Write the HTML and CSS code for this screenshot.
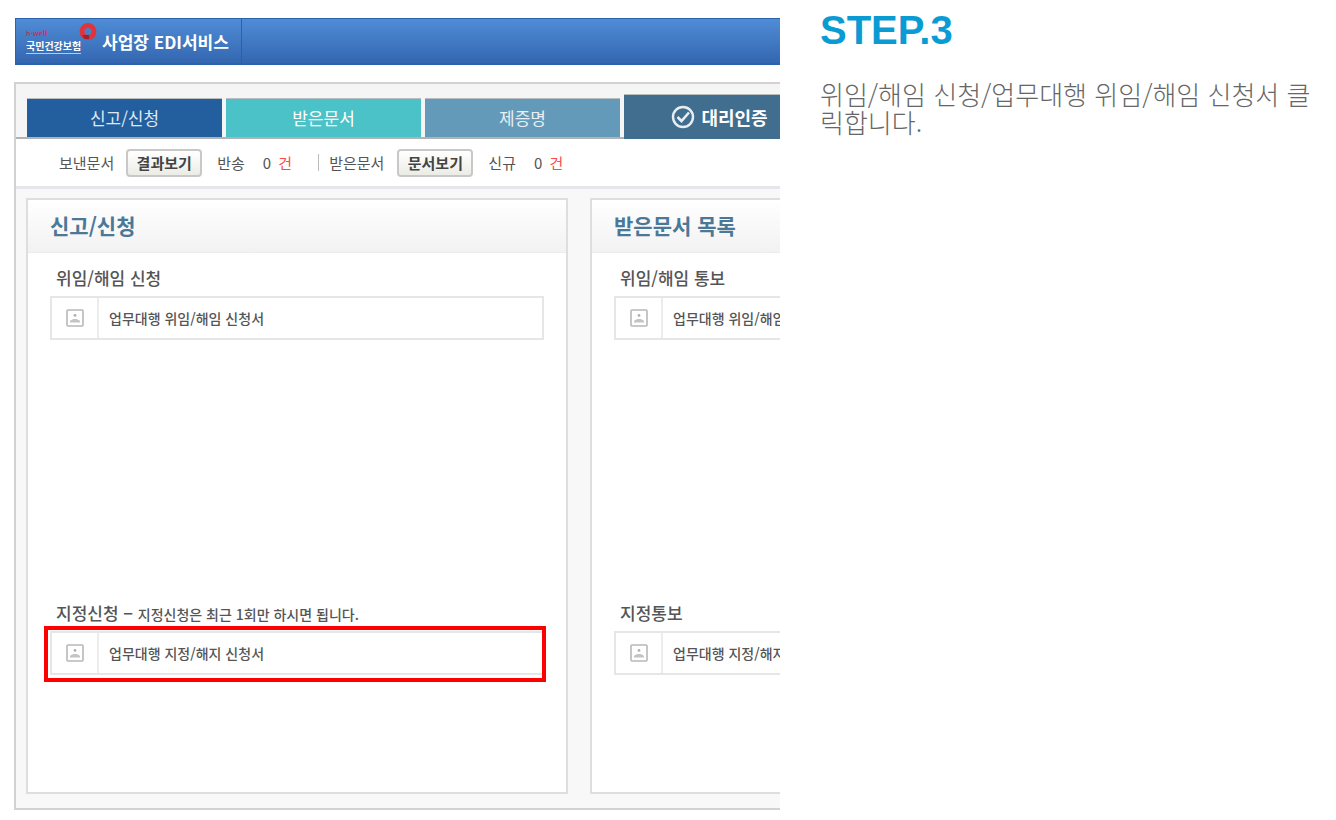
FILE: index.html
```html
<!DOCTYPE html>
<html lang="ko">
<head>
<meta charset="utf-8">
<meta name="viewport" content="width=device-width, initial-scale=1">
<title>사업장 EDI서비스 - STEP.3</title>
<link rel="stylesheet" href="styles.css">
</head>
<body>
<svg class="sprite" aria-hidden="true">
  <symbol id="doc" viewBox="0 0 18 18">
    <rect x="1" y="1" width="16" height="16" rx="1" fill="#fff" stroke="#b8b8b8" stroke-width="1.6"/>
    <circle cx="9" cy="6.4" r="1.4" fill="#b0b0b0"/>
    <path d="M4 13.600V12c1.400-1.400 3.200-2 5-2s3.600.6 5 2v1.600z" fill="#c4c4c4"/>
  </symbol>
</svg>
<main class="page">
  <section class="preview">
    <div class="screen">
      <header class="bar">
        <a class="brand" href="#">
          <span class="logo">
            <span class="logo-top">h·well</span>
            <span class="logo-name">국민건강보험</span>
            <svg class="logo-ring" viewBox="0 0 18 18" aria-hidden="true">
              <circle cx="9" cy="8.500" r="6" fill="none" stroke="#e23338" stroke-width="5"/>
              <path d="M5.500 6h7L9 11z" fill="#4a7dc9"/>
              <path d="M3 12h7v4H5.500z" fill="#a3202c"/>
            </svg>
          </span>
          <span class="service">사업장 EDI서비스</span>
        </a>
      </header>
      <div class="frame">
        <nav class="tabs">
          <button class="tab tab-apply" type="button">신고/신청</button>
          <button class="tab tab-inbox" type="button">받은문서</button>
          <button class="tab tab-cert" type="button">제증명</button>
          <button class="tab tab-agent" type="button">
            <svg class="check" viewBox="0 0 24 24" aria-hidden="true"><circle cx="12" cy="12" r="10" fill="none" stroke="#e6eef3" stroke-width="2.400"/><path d="M6.500 12l4 4 7.500-8.500" fill="none" stroke="#e6eef3" stroke-width="2.600"/></svg>
            대리인증
          </button>
        </nav>
        <div class="status">
          <span class="sent">보낸문서</span>
          <button class="mini" type="button">결과보기</button>
          <span class="kind">반송</span>
          <span class="count">0 <em>건</em></span>
          <span class="received">받은문서</span>
          <button class="mini" type="button">문서보기</button>
          <span class="kind">신규</span>
          <span class="count">0 <em>건</em></span>
        </div>
        <div class="panels">
          <section class="panel">
            <h2 class="panel-title">신고/신청</h2>
            <div class="groups">
              <div class="group">
                <h3 class="label">위임/해임 신청</h3>
                <a class="item" href="#"><span class="thumb"><svg class="doc"><use href="#doc"/></svg></span><span class="name">업무대행 위임/해임 신청서</span></a>
              </div>
              <div class="group">
                <h3 class="label">지정신청 − <small class="note">지정신청은 최근 1회만 하시면 됩니다.</small></h3>
                <a class="item item-marked" href="#"><span class="thumb"><svg class="doc"><use href="#doc"/></svg></span><span class="name">업무대행 지정/해지 신청서</span></a>
              </div>
            </div>
          </section>
          <section class="panel">
            <h2 class="panel-title">받은문서 목록</h2>
            <div class="groups">
              <div class="group">
                <h3 class="label">위임/해임 통보</h3>
                <a class="item" href="#"><span class="thumb"><svg class="doc"><use href="#doc"/></svg></span><span class="name">업무대행 위임/해임 통보서</span></a>
              </div>
              <div class="group">
                <h3 class="label">지정통보</h3>
                <a class="item" href="#"><span class="thumb"><svg class="doc"><use href="#doc"/></svg></span><span class="name">업무대행 지정/해지 통보서</span></a>
              </div>
            </div>
          </section>
        </div>
      </div>
    </div>
  </section>
  <section class="guide">
    <h1 class="step">STEP.3</h1>
    <p class="text">위임/해임 신청/업무대행 위임/해임 신청서 클릭합니다.</p>
  </section>
</main>
</body>
</html>
```
FILE: styles.css
```css
* { box-sizing: border-box; }
body {
  margin: 0;
  background: #fff;
  color: #555;
  font-family: "Noto Sans CJK KR", sans-serif;
}
h1, h2, h3, p { margin: 0; }
a { color: inherit; text-decoration: none; }
button { font-family: inherit; cursor: pointer; }
.sprite { position: absolute; width: 0; height: 0; }

.page {
  display: grid;
  grid-template-columns: minmax(0, 780fr) minmax(0, 516fr);
  gap: 40px;
}
.preview { overflow: hidden; padding: 18px 0 10px 14px; }
.screen { width: 1130px; }

.bar {
  display: flex;
  height: 47px;
  margin-left: 1px;
  border: 1px solid #2c62ae;
  border-bottom-width: 2px;
  background: linear-gradient(#508cd6, #3367b0);
}
.brand {
  display: flex;
  align-items: center;
  gap: 6px;
  padding: 0 12px 0 10px;
  border-right: 1px solid #2f609f;
  color: #fff;
}
.logo { position: relative; display: block; width: 70px; }
.logo-top, .logo-name { display: block; font-weight: 700; white-space: nowrap; }
.logo-top { color: #b73a5c; font-size: 7px; line-height: 10px; }
.logo-name { width: 55px; border-bottom: 1px solid #b4cbea; font-size: 10px; line-height: 15px; }
.logo-ring { position: absolute; top: -5px; right: -1px; width: 18px; height: 18px; }
.service { font-size: 17px; font-weight: 700; white-space: nowrap; }

.frame {
  margin-top: 17px;
  border: 2px solid #d2d2d2;
  background: #f8f8f8;
}
.tabs {
  display: flex;
  align-items: flex-end;
  gap: 4px;
  padding: 10px 11px 0;
  border-bottom: 2px solid #b0b3b5;
  background: #f5f5f5;
}
.tab {
  display: flex;
  align-items: center;
  justify-content: center;
  gap: 6px;
  width: 195px;
  height: 39px;
  padding: 0 0 2px;
  border: 0;
  border-top: 1px solid #b8bec0;
  color: #fff;
  font-size: 17px;
}
.tab-apply { background: #235f9f; color: #dfe9f3; }
.tab-inbox { background: #4bc2c8; }
.tab-cert { background: #639ab9; color: #e8f0f5; }
.tab-agent { height: 45px; margin-bottom: -2px; padding: 0 4px 0 0; background: #416d8e; font-size: 18px; font-weight: 700; }
.check { width: 24px; height: 24px; }

.status {
  display: flex;
  align-items: center;
  height: 50px;
  padding-left: 43px;
  border-bottom: 3px solid #e6e6ea;
  background: #fff;
  font-size: 15px;
}
.mini {
  width: 76px;
  height: 28px;
  margin: 0 15px 0 12px;
  padding: 0;
  border: 2px solid #c8c8c8;
  border-radius: 4px;
  background: linear-gradient(#fff, #ecece6);
  color: #444;
  font-size: 15px;
  font-weight: 700;
  line-height: 22px;
}
.count { margin-left: 18px; white-space: pre; }
.count em { margin-left: 3px; color: #ff4a4a; font-style: normal; }
.received { margin-left: 26px; padding: 0 1px 0 10px; border-left: 1px solid #bbb; line-height: 17px; }

.panels {
  display: grid;
  grid-template-columns: 1fr 1fr;
  gap: 22px;
  padding: 9px 10px 14px;
}
.panel { border: 2px solid #dedede; background: #fff; }
.panel-title {
  height: 53px;
  padding-left: 22px;
  border-bottom: 1px solid #ececec;
  background: linear-gradient(#fff, #f2f2f2);
  color: #4c7898;
  font-size: 21px;
  font-weight: 700;
  line-height: 51px;
}
.groups { padding: 12px 22px 0; }
.group { height: 335px; }
.group:last-child { height: 192px; }
.label {
  height: 31px;
  padding-left: 6px;
  font-size: 17px;
  font-weight: 500;
  line-height: 25px;
}
.note { font-size: 14px; font-weight: 500; }
.item {
  position: relative;
  display: flex;
  height: 44px;
  border: 2px solid #e6e6e6;
  font-size: 14px;
  font-weight: 500;
  line-height: 40px;
}
.thumb {
  display: grid;
  place-items: center;
  width: 47px;
  border-right: 2px solid #ececec;
}
.doc { width: 18px; height: 18px; }
.name { padding-left: 10px; white-space: nowrap; }
.item-marked::after {
  content: "";
  position: absolute;
  inset: -7px -4px -9px -8px;
  border: 4px solid #f00;
}

.guide { padding: 8px 16px 0 0; }
.step {
  color: #0b9bd3;
  font-family: "Liberation Sans", sans-serif;
  font-size: 40px;
  font-weight: 700;
  line-height: 44px;
}
.text {
  margin-top: 28px;
  padding-right: 8px;
  color: #666;
  font-size: 26px;
  font-weight: 300;
  line-height: 28px;
}
```
